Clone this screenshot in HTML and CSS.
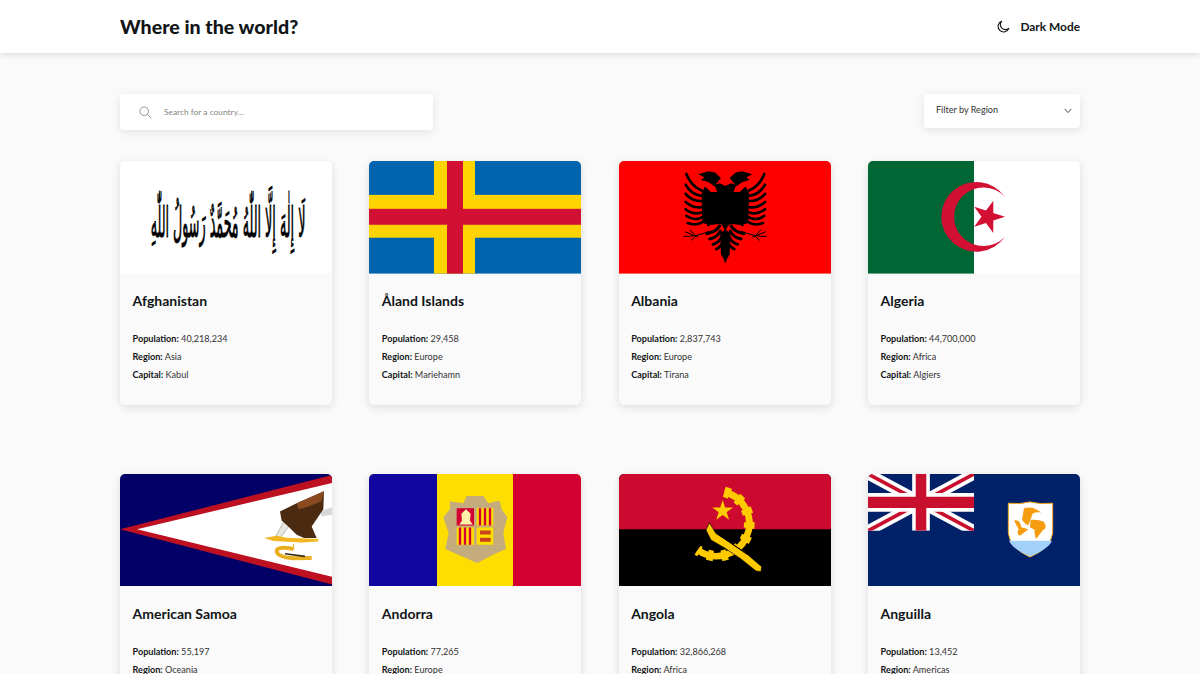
FILE: index.html
```html
<!DOCTYPE html>
<html lang="en">
<head>
<meta charset="utf-8">
<title>Where in the world?</title>
<link rel="stylesheet" href="styles.css">
</head>
<body>
<header class="topbar">
  <div class="wrap topbar-row">
    <h1 class="brand">Where in the world?</h1>
    <button class="mode">
      <svg class="moon" viewBox="0 0 14 14"><path d="M5.2 1.2A6 6 0 1 0 12.9 8.8 5.2 5.2 0 0 1 5.2 1.2Z"/></svg>
      <span>Dark Mode</span>
    </button>
  </div>
</header>
<main class="wrap">
  <div class="controls">
    <label class="search">
      <svg class="search-icon" viewBox="0 0 14 14"><circle cx="5.6" cy="5.6" r="4.6"/><path d="M9 9l4.4 4.4"/></svg>
      <input class="search-input" type="text" placeholder="Search for a country...">
    </label>
    <div class="filter">
      <span class="filter-label">Filter by Region</span>
      <svg class="chev" viewBox="0 0 8 6"><path d="M.7 1l3.3 3.6L7.3 1"/></svg>
    </div>
  </div>

  <section class="grid">
    <article class="card">
      <svg class="flag" viewBox="0 0 212 113" preserveAspectRatio="none">
        <rect width="212" height="113" fill="#fff"/>
        <text class="shahada" transform="translate(108 76) scale(.635 2.1)" text-anchor="middle" direction="rtl">لَا إِلٰهَ إِلَّا اللّٰهُ مُحَمَّدٌ رَسُولُ اللّٰهِ</text>
      </svg>
      <div class="body">
        <h2 class="name">Afghanistan</h2>
        <p class="fact"><b>Population:</b> 40,218,234</p>
        <p class="fact"><b>Region:</b> Asia</p>
        <p class="fact"><b>Capital:</b> Kabul</p>
      </div>
    </article>

    <article class="card">
      <svg class="flag" viewBox="0 0 212 113" preserveAspectRatio="none">
        <rect width="212" height="113" fill="#0064ae"/>
        <rect x="65" width="41" height="113" fill="#ffd300"/>
        <rect y="34" width="212" height="43" fill="#ffd300"/>
        <rect x="78" width="16" height="113" fill="#d21034"/>
        <rect y="48" width="212" height="16" fill="#d21034"/>
      </svg>
      <div class="body">
        <h2 class="name">Åland Islands</h2>
        <p class="fact"><b>Population:</b> 29,458</p>
        <p class="fact"><b>Region:</b> Europe</p>
        <p class="fact"><b>Capital:</b> Mariehamn</p>
      </div>
    </article>

    <article class="card">
      <svg class="flag" viewBox="0 0 212 113" preserveAspectRatio="none">
        <rect width="212" height="113" fill="#f00"/>
        <defs>
          <g id="eagle-half">
            <path d="M346 80 L326 70 L314 74 L330 54 L312 38 L292 34 L262 43 L280 52 L270 60 L292 66 L314 82 L318 96 L300 96 L282 80 L272 100 L274 190 L296 196 L330 192 L346 215 Z"/>
            <g class="eagle-feathers">
              <path d="M272 92 Q240 78 226 42"/>
              <path d="M272 108 Q240 104 224 74"/>
              <path d="M272 124 Q242 124 224 102"/>
              <path d="M272 142 Q244 146 224 126"/>
              <path d="M272 158 Q246 166 224 148"/>
              <path d="M274 172 Q250 186 226 168"/>
              <path d="M276 186 Q256 200 230 190"/>
              <path d="M300 170 Q310 178 306 190"/>
              <path d="M286 172 Q296 182 292 196"/>
            </g>
            <g class="eagle-tail">
              <path d="M326 198 Q316 216 288 222"/>
              <path d="M328 214 Q320 232 296 238"/>
              <path d="M332 232 Q324 248 306 254"/>
              <path d="M336 246 Q330 262 316 268"/>
            </g>
            <path d="M346 210 L328 218 L330 284 L344 309 L346 309 Z"/>
            <path class="eagle-twig" d="M218 230 Q254 232 296 214 M222 216 L262 232 M240 242 L258 226 M236 210 L250 224"/>
          </g>
        </defs>
        <g transform="translate(-8 -1) scale(.3333)">
          <use href="#eagle-half"/>
          <use href="#eagle-half" transform="translate(686 0) scale(-1 1)"/>
        </g>
      </svg>
      <div class="body">
        <h2 class="name">Albania</h2>
        <p class="fact"><b>Population:</b> 2,837,743</p>
        <p class="fact"><b>Region:</b> Europe</p>
        <p class="fact"><b>Capital:</b> Tirana</p>
      </div>
    </article>

    <article class="card">
      <svg class="flag" viewBox="0 0 212 113" preserveAspectRatio="none">
        <rect width="212" height="113" fill="#fff"/>
        <rect width="106" height="113" fill="#006633"/>
        <path d="M137 36A35 35 0 1 0 137 76A29.4 29.4 0 1 1 137 36Z" fill="#d21034"/>
        <polygon points="137,56 125.3,59.8 125.3,72.2 118,62.2 106.2,66 113.5,56 106.2,46 118,49.8 125.3,39.8 125.3,52.2" fill="#d21034"/>
      </svg>
      <div class="body">
        <h2 class="name">Algeria</h2>
        <p class="fact"><b>Population:</b> 44,700,000</p>
        <p class="fact"><b>Region:</b> Africa</p>
        <p class="fact"><b>Capital:</b> Algiers</p>
      </div>
    </article>

    <article class="card">
      <svg class="flag" viewBox="0 0 212 113" preserveAspectRatio="none">
        <rect width="212" height="113" fill="#000066"/>
        <polygon points="0,55.5 212,1 212,111" fill="#bd1021"/>
        <polygon points="17,55.5 212,9 212,103" fill="#fff"/>
        <g transform="translate(0 -4) scale(.3333)">
          <polygon points="600,125 636,112 636,135 605,140" fill="#d8d8d8"/>
          <polygon points="492,155 510,165 480,205 468,198" fill="#e8e8e0" stroke="#777" stroke-width="1.5"/>
          <polygon points="480,125 530,100 612,64 610,118 575,170 590,205 552,205 530,195 505,170 485,152" fill="#4a2a10"/>
          <polygon points="530,100 612,64 604,95 560,112 535,118" fill="#8a4a20"/>
          <polygon points="432,205 470,198 500,204 595,208 595,215 545,218 500,216 460,214" fill="#f2b821"/>
          <path d="M520 238 Q470 228 470 245 Q472 262 520 266 L575 265" fill="none" stroke="#e8b020" stroke-width="12"/>
          <path d="M495 252 L555 260" fill="none" stroke="#3a2a10" stroke-width="5"/>
          <path d="M520 222 L522 240" fill="none" stroke="#e8b020" stroke-width="3"/>
        </g>
      </svg>
      <div class="body">
        <h2 class="name">American Samoa</h2>
        <p class="fact"><b>Population:</b> 55,197</p>
        <p class="fact"><b>Region:</b> Oceania</p>
        <p class="fact"><b>Capital:</b> Pago Pago</p>
      </div>
    </article>

    <article class="card">
      <svg class="flag" viewBox="0 0 212 113" preserveAspectRatio="none">
        <rect width="212" height="113" fill="#fedd00"/>
        <rect width="68" height="113" fill="#10069f"/>
        <rect x="144" width="68" height="113" fill="#d50032"/>
        <g transform="translate(31 6) scale(.3333)">
          <path d="M200 48L250 48L265 70L298 62L306 90L322 112L310 160L318 208L282 224L232 250L176 226L136 208L146 160L130 112L150 88L150 64L190 70Z" fill="#c4ac7c"/>
          <rect x="170" y="85" width="52" height="52" fill="#d50032"/>
          <path d="M198 88L212 102L210 122L218 134L178 134L186 122L184 102Z" fill="#fff2a8"/>
          <rect x="230" y="85" width="50" height="52" fill="#fedd00"/>
          <path class="adr" d="M240 85V137M255 85V137M270 85V137"/>
          <rect x="170" y="143" width="52" height="52" fill="#fedd00"/>
          <path class="adr" d="M180 143V195M195 143V195M210 143V195"/>
          <rect x="230" y="143" width="50" height="52" fill="#fedd00"/>
          <path d="M240 152H272V164H240ZM240 174H272V186H240Z" fill="#c8401c"/>
        </g>
      </svg>
      <div class="body">
        <h2 class="name">Andorra</h2>
        <p class="fact"><b>Population:</b> 77,265</p>
        <p class="fact"><b>Region:</b> Europe</p>
        <p class="fact"><b>Capital:</b> Andorra la Vella</p>
      </div>
    </article>

    <article class="card">
      <svg class="flag" viewBox="0 0 212 113" preserveAspectRatio="none">
        <rect width="212" height="113" fill="#000"/>
        <rect width="212" height="55.5" fill="#cc092f"/>
        <g transform="translate(42 -2) scale(.3333)">
          <path d="M190 60A98 98 0 1 1 110 235" fill="none" stroke="#ffcb00" stroke-width="20"/>
          <path d="M190 60A98 98 0 1 1 110 235" fill="none" stroke="#ffcb00" stroke-width="32" stroke-dasharray="18 24"/>
          <polygon points="185,84 192.4,106.8 216.4,106.8 197,120.9 204.4,143.7 185,129.6 165.6,143.7 173,120.9 153.6,106.8 177.6,106.8" fill="#ffcb00"/>
          <polygon points="145,153 165,185 250,240 302,285 300,300 285,298 240,262 190,228 150,205 135,175" fill="#ffcb00" stroke="#000" stroke-width="2"/>
          <path d="M165 183L258 248" stroke="#000" stroke-width="3"/>
        </g>
      </svg>
      <div class="body">
        <h2 class="name">Angola</h2>
        <p class="fact"><b>Population:</b> 32,866,268</p>
        <p class="fact"><b>Region:</b> Africa</p>
        <p class="fact"><b>Capital:</b> Luanda</p>
      </div>
    </article>

    <article class="card">
      <svg class="flag" viewBox="0 0 212 113" preserveAspectRatio="none">
        <rect width="212" height="113" fill="#012169"/>
        <svg x="0" y="0" width="106" height="57" viewBox="0 0 60 30" preserveAspectRatio="none">
          <path d="M0 0L60 30M60 0L0 30" stroke="#fff" stroke-width="6"/>
          <path d="M0 0L60 30M60 0L0 30" stroke="#c8102e" stroke-width="2"/>
          <path d="M30 0V30M0 15H60" stroke="#fff" stroke-width="10"/>
          <path d="M30 0V30M0 15H60" stroke="#c8102e" stroke-width="6"/>
        </svg>
        <g transform="translate(-8 -4) scale(.3333)">
          <path d="M445 100Q480 104 510 96Q540 104 578 100L578 190Q572 235 510 262Q450 235 445 190Z" fill="#fff" stroke="#f5a81c" stroke-width="3"/>
          <path d="M447 213H576Q566 238 510 260Q458 238 447 213Z" fill="#a3d0fa"/>
          <g fill="#f59d0e">
            <path d="M492 115Q520 108 544 128Q526 126 518 132L506 165Q498 168 486 150Z"/>
            <path d="M512 150Q535 148 550 155Q565 172 548 182L528 208Q522 188 524 180L510 172Z"/>
            <path d="M462 152Q480 148 484 172L505 178L480 198Q468 192 476 178Z"/>
          </g>
        </g>
      </svg>
      <div class="body">
        <h2 class="name">Anguilla</h2>
        <p class="fact"><b>Population:</b> 13,452</p>
        <p class="fact"><b>Region:</b> Americas</p>
        <p class="fact"><b>Capital:</b> The Valley</p>
      </div>
    </article>
  </section>
</main>
</body>
</html>
```

FILE: styles.css
```css
* { box-sizing: border-box; }

html, body { margin: 0; padding: 0; }

body {
  background: #fafafa;
  color: #111517;
  font-family: "Lato", "Noto Sans", sans-serif;
}

.wrap { width: 960px; margin: 0 auto; }

.topbar {
  height: 53px;
  background: #fff;
  box-shadow: 0 2px 6px rgba(0, 0, 0, .12);
}

.topbar-row {
  height: 100%;
  display: flex;
  align-items: center;
  justify-content: space-between;
}

.brand { margin: 0; font-size: 19.6px; font-weight: 900; }

.mode {
  display: flex;
  align-items: center;
  gap: 10px;
  padding: 0;
  border: 0;
  background: none;
  color: inherit;
  font: 700 11.9px "Lato", sans-serif;
}

.moon { width: 13px; height: 13px; fill: none; stroke: #111517; stroke-width: 1.2; }

.controls {
  display: flex;
  justify-content: space-between;
  align-items: flex-start;
  padding-top: 41px;
}

.search {
  width: 313px;
  height: 36px;
  display: flex;
  align-items: center;
  gap: 12px;
  padding-left: 19px;
  background: #fff;
  border-radius: 4px;
  box-shadow: 0 2px 8px rgba(0, 0, 0, .1);
}

.search-icon { width: 13px; height: 13px; fill: none; stroke: #8c8c8c; stroke-width: 1; }

.search-input {
  flex: 1;
  min-width: 0;
  border: 0;
  outline: 0;
  padding: 0;
  background: none;
  font: 400 8.4px "Lato", sans-serif;
}

.search-input::placeholder { color: #858585; opacity: 1; }

.filter {
  width: 156px;
  height: 34px;
  display: flex;
  align-items: center;
  justify-content: space-between;
  padding: 0 8px 0 12px;
  background: #fff;
  border-radius: 4px;
  box-shadow: 0 2px 8px rgba(0, 0, 0, .1);
  font-size: 9.1px;
  color: #333;
}

.filter-label { line-height: 12px; padding-bottom: 2px; }

.chev { width: 8px; height: 6px; fill: none; stroke: #333; stroke-width: .9; }

.grid {
  display: grid;
  grid-template-columns: repeat(4, 212px);
  justify-content: space-between;
  row-gap: 68.6px;
  padding-top: 31px;
}

.card {
  height: 244px;
  overflow: hidden;
  border-radius: 5px;
  background: #fafafa;
  box-shadow: 0 2px 9px rgba(0, 0, 0, .12);
}

.flag { display: block; width: 212px; height: 112.6px; }

.body { padding: 17.4px 12.5px 0; }

.name {
  margin: 0 0 19px;
  font-size: 14px;
  line-height: 20px;
  font-weight: 700;
}

.fact {
  margin: 0;
  font-size: 9.1px;
  line-height: 18px;
  color: #333;
}

.fact b { color: #111517; font-weight: 700; }

.shahada {
  font-family: "DejaVu Sans", sans-serif;
  font-size: 20px;
  font-weight: 400;
  fill: #000;
  stroke: #000;
  stroke-width: .45;
}

.eagle-feathers path { fill: none; stroke: #000; stroke-width: 8; stroke-linecap: round; }
.eagle-tail path { fill: none; stroke: #000; stroke-width: 9; stroke-linecap: round; }
.eagle-twig { fill: none; stroke: #000; stroke-width: 3; }
.adr { fill: none; stroke: #d50032; stroke-width: 7; }
```
